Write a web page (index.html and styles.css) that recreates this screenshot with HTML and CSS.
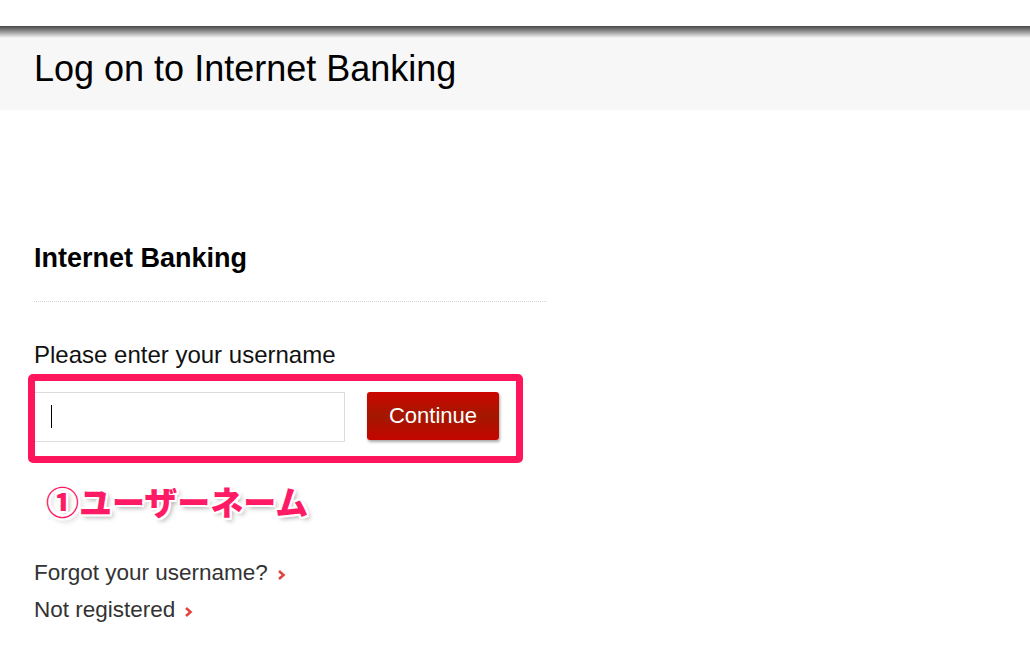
FILE: index.html
```html
<!DOCTYPE html>
<html lang="en">
<head>
    <meta charset="UTF-8">
    <title>Log on to Internet Banking</title>
    <meta name="viewport" content="width=device-width, initial-scale=1.0">
    <link rel="stylesheet" href="styles.css">
</head>
<body>
    <div class="topbar"></div>
    <header class="page-header">
        <h1>Log on to Internet Banking</h1>
    </header>
    <main class="content">
        <h2>Internet Banking</h2>
        <form class="logon-form">
            <label for="username">Please enter your username</label>
            <div class="form-row">
                <input type="text" id="username" autocomplete="off" autofocus>
                <span class="caret"></span>
                <button type="submit">Continue</button>
                <div class="callout-box"></div>
            </div>
        </form>
        <div class="callout-text">①ユーザーネーム</div>
        <ul class="links">
            <li><a href="#">Forgot your username?</a><svg class="chev" width="9" height="12" viewBox="0 0 9 12"><polyline points="2,2 6.5,6 2,10" fill="none" stroke="#e2453e" stroke-width="2.6"/></svg></li>
            <li><a href="#">Not registered</a><svg class="chev" width="9" height="12" viewBox="0 0 9 12"><polyline points="2,2 6.5,6 2,10" fill="none" stroke="#e2453e" stroke-width="2.6"/></svg></li>
        </ul>
    </main>
</body>
</html>
```

FILE: styles.css
```css
body { font-family: 'Liberation Sans', Arial, sans-serif; background: #fff; margin: 0; color: #000; }
.topbar { height: 26px; background: #fff; }
.page-header { height: 84px; background: linear-gradient(#464646 0, #9a9a9a 6px, #f7f7f7 12px, #f7f7f7 100%); }
.page-header h1 { margin: 0; padding: 22px 0 0 34px; font-size: 36px; font-weight: normal; line-height: 41px; color: #000; }
.content { padding: 133px 0 40px 34px; }
h2 { margin: 0; font-size: 27px; line-height: 31px; font-weight: bold; width: 513px; padding-bottom: 27px; border-bottom: 1px dotted #d6d6d6; }
.logon-form label { display: block; margin-top: 40px; font-size: 24px; line-height: 26px; color: #111; }
.form-row { position: relative; display: flex; align-items: flex-start; gap: 22px; margin-top: 24px; }
.form-row input { width: 311px; height: 50px; box-sizing: border-box; border: 1px solid #dcdcdc; padding: 0 16px; font-size: 20px; font-family: inherit; outline: none; caret-color: #000; }
.caret { position: absolute; left: 17px; top: 13px; width: 1px; height: 23px; background: #000; }
.form-row button { width: 132px; height: 48px; border: none; border-radius: 3px; background: linear-gradient(#cc0600, #a31800 50%, #c40400); color: #fff; font-size: 22px; font-family: inherit; box-shadow: 1px 2px 3px rgba(0,0,0,0.35); cursor: pointer; }
.callout-box { position: absolute; left: -6px; top: -18px; width: 495px; height: 89px; box-sizing: border-box; border: 7px solid #ff155c; border-radius: 5px; pointer-events: none; }
.callout-text { margin-top: 36px; padding-left: 12px; font-family: 'Noto Sans CJK JP', sans-serif; font-weight: 900; font-size: 33px; line-height: 46px; color: #ff1a66;
    text-shadow: 2px 0 0 #fff, -2px 0 0 #fff, 0 2px 0 #fff, 0 -2px 0 #fff, 2px 2px 0 #fff, -2px -2px 0 #fff, 2px -2px 0 #fff, -2px 2px 0 #fff, 3px 3px 5px rgba(0,0,0,0.35); }
.links { list-style: none; margin: 31px 0 0; padding: 0; }
.links li { font-size: 22.5px; line-height: 36.5px; }
.links a { color: #333; text-decoration: none; }
.chev { margin-left: 9px; vertical-align: -1px; }
```
